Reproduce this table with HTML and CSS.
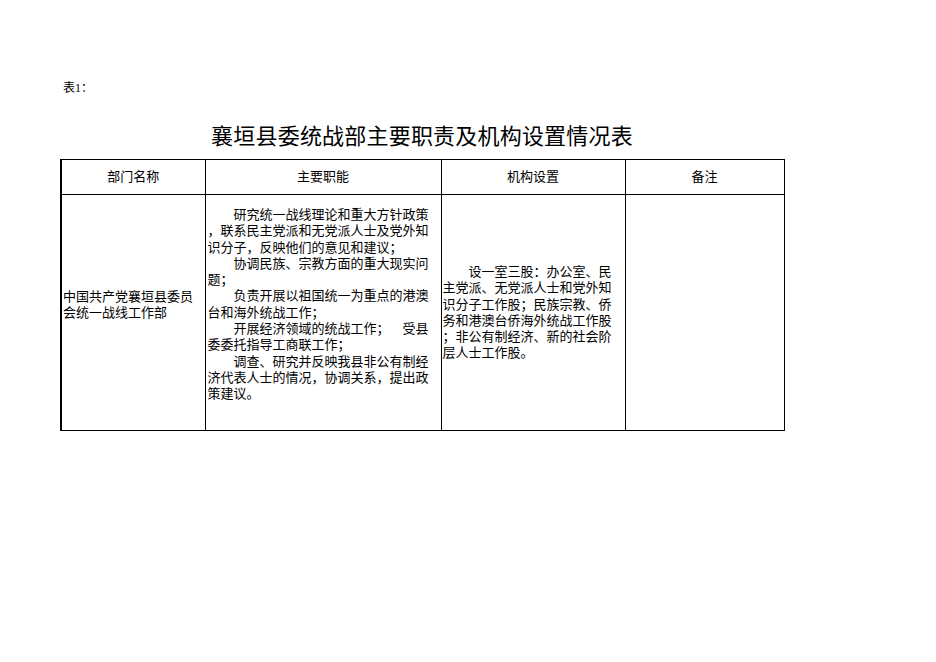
FILE: index.html
```html
<!DOCTYPE html>
<html lang="zh-CN">
<head>
<meta charset="utf-8">
<title>襄垣县委统战部主要职责及机构设置情况表</title>
<link rel="stylesheet" href="styles.css">
</head>
<body>
<div class="page">
  <div class="label">表1：</div>
  <h1 class="title">襄垣县委统战部主要职责及机构设置情况表</h1>
  <table class="grid">
    <colgroup>
      <col class="c1"><col class="c2"><col class="c3"><col class="c4">
    </colgroup>
    <thead>
      <tr class="head">
        <th>部门名称</th>
        <th>主要职能</th>
        <th>机构设置</th>
        <th>备注</th>
      </tr>
    </thead>
    <tbody>
      <tr class="body">
        <td class="dept">
          <div class="ln">中国共产党襄垣县委员</div>
          <div class="ln">会统一战线工作部</div>
        </td>
        <td class="duty">
          <div class="ln">　　研究统一战线理论和重大方针政策</div>
          <div class="ln">，联系民主党派和无党派人士及党外知</div>
          <div class="ln">识分子，反映他们的意见和建议；</div>
          <div class="ln">　　协调民族、宗教方面的重大现实问</div>
          <div class="ln">题；</div>
          <div class="ln">　　负责开展以祖国统一为重点的港澳</div>
          <div class="ln">台和海外统战工作；</div>
          <div class="ln split"><span>　　开展经济领域的统战工作；</span><span>受县</span></div>
          <div class="ln">委委托指导工商联工作；</div>
          <div class="ln">　　调查、研究并反映我县非公有制经</div>
          <div class="ln">济代表人士的情况，协调关系，提出政</div>
          <div class="ln">策建议。</div>
        </td>
        <td class="org">
          <div class="ln">　　设一室三股：办公室、民</div>
          <div class="ln">主党派、无党派人士和党外知</div>
          <div class="ln">识分子工作股；民族宗教、侨</div>
          <div class="ln">务和港澳台侨海外统战工作股</div>
          <div class="ln">；非公有制经济、新的社会阶</div>
          <div class="ln">层人士工作股。</div>
        </td>
        <td class="note"></td>
      </tr>
    </tbody>
  </table>
</div>
</body>
</html>
```

FILE: styles.css
```css
html, body {
  margin: 0;
  padding: 0;
  background: #ffffff;
}

body {
  font-family: "Liberation Serif", "Noto Sans CJK SC", serif;
  color: #000000;
  font-size: 13px;
}

.page {
  width: 724px;
  padding: 80px 0 0 60px;
}

.label {
  font-size: 12px;
  line-height: 16px;
  padding-left: 3px;
}

.title {
  margin: 26px 0 0 0;
  font-weight: normal;
  font-size: 22px;
  line-height: 30px;
  text-align: center;
  letter-spacing: 0.2px;
}

.grid {
  margin-top: 7px;
  border-collapse: collapse;
  table-layout: fixed;
  width: 723px;
}

.c1 { width: 144px; }
.c2 { width: 236px; }
.c3 { width: 184px; }
.c4 { width: 159px; }

.grid th,
.grid td {
  border: 1px solid #000000;
  padding: 0;
}

.grid th:first-child,
.grid td:first-child {
  border-left: 2px solid #000000;
}

.head {
  height: 35px;
}

.head th {
  font-weight: normal;
  font-size: 13px;
  text-align: center;
  vertical-align: middle;
  padding-bottom: 4px;
}

.body {
  height: 236px;
}

.body td {
  vertical-align: top;
  font-size: 13px;
}

.ln {
  line-height: 16.3px;
  white-space: nowrap;
}

.grid .dept {
  padding: 94px 0 0 1px;
}

.grid .duty {
  padding: 12px 0 0 2px;
}

.split {
  display: flex;
  justify-content: space-between;
  width: 221px;
}

.grid .org {
  padding: 69px 0 0 1px;
}
```
